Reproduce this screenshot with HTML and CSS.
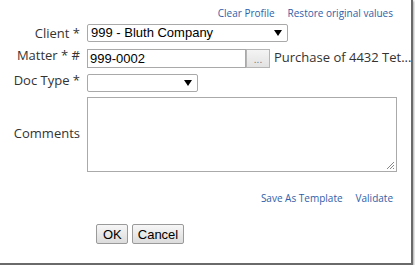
FILE: index.html
```html
<!DOCTYPE html>
<html>
<head>
<meta charset="utf-8">
<link rel="stylesheet" href="styles.css">
</head>
<body>
<div class="frame">
  <div class="toplinks">
    <a class="link">Clear Profile</a>
    <a class="link">Restore original values</a>
  </div>
  <div class="form">
    <div class="label">Client *</div>
    <div class="field">
      <div class="select client"><span>999 - Bluth Company</span><svg class="arrow" width="8" height="6" viewBox="0 0 8 6"><path d="M0 0H8L4 6Z" fill="#000"/></svg></div>
    </div>
    <div class="label">Matter * #</div>
    <div class="field">
      <div class="input matter">999-0002</div><div class="dots">...</div><span class="desc">Purchase of 4432 Tet...</span>
    </div>
    <div class="label">Doc Type *</div>
    <div class="field">
      <div class="select doctype"><span></span><svg class="arrow" width="8" height="6" viewBox="0 0 8 6"><path d="M0 0H8L4 6Z" fill="#000"/></svg></div>
    </div>
    <div class="label comments-label">Comments</div>
    <div class="field">
      <div class="textarea"><svg class="grip" width="9" height="9" viewBox="0 0 9 9"><path d="M8 1L1 8M8 4L4 8M8 7L7 8" stroke="#888" stroke-width="1"/></svg></div>
    </div>
  </div>
  <div class="actions">
    <a class="link">Save As Template</a>
    <a class="link">Validate</a>
  </div>
  <div class="buttons">
    <button class="btn ok">OK</button>
    <button class="btn cancel">Cancel</button>
  </div>
</div>
</body>
</html>
```
FILE: styles.css
```css
html, body {
  margin: 0;
  padding: 0;
  background: #fff;
}
.frame {
  box-sizing: border-box;
  width: 413px;
  height: 265px;
  border-right: 2px solid #6a6a6a;
  border-bottom: 2px solid #6a6a6a;
  box-shadow: 1px 1px 2px rgba(0,0,0,0.35);
  font-family: "Open Sans", sans-serif;
  color: #333;
  position: relative;
}
.link {
  color: #2f5ea8;
  font-size: 10px;
  font-family: "Open Sans", sans-serif;
}
.toplinks {
  display: flex;
  justify-content: flex-end;
  gap: 13px;
  padding: 6px 18px 0 0;
  height: 18px;
  box-sizing: border-box;
  line-height: 14px;
}
.form {
  display: grid;
  grid-template-columns: 80px auto;
  column-gap: 7px;
  row-gap: 0;
  margin-top: 5px;
}
.label {
  text-align: right;
  font-size: 13px;
  line-height: 18px;
  color: #333;
  align-self: center;
}
.comments-label {
  padding-top: 2px;
}
.field {
  display: flex;
  align-items: center;
}
.field:nth-child(2) { height: 19px; }
.field:nth-child(4) { height: 19px; margin-top: 7px; }
.field:nth-child(6) { height: 18px; margin-top: 6px; }
.field:nth-child(8) { margin-top: 5px; }
.select {
  box-sizing: border-box;
  height: 18px;
  border: 1px solid #a9a9a9;
  border-radius: 2px;
  background: #fff;
  display: flex;
  align-items: center;
  justify-content: space-between;
  padding: 0 5px 0 3px;
  font-family: "Liberation Sans", Arial, sans-serif;
  font-size: 13px;
  color: #000;
}
.client { width: 201px; }
.doctype { width: 111px; }
.input {
  box-sizing: border-box;
  height: 19px;
  width: 159px;
  border: 1px solid #a9a9a9;
  padding: 0 2px;
  font-family: "Liberation Sans", Arial, sans-serif;
  font-size: 13px;
  line-height: 17px;
  color: #000;
}
.dots {
  box-sizing: border-box;
  width: 24px;
  height: 19px;
  border: 1px solid #b5b5b5;
  background: linear-gradient(#f4f4f4, #e2e2e2);
  font-family: "Liberation Sans", Arial, sans-serif;
  font-size: 10px;
  color: #777;
  text-align: center;
  line-height: 19px;
}
.desc {
  margin-left: 4px;
  font-size: 13px;
  color: #333;
  white-space: nowrap;
  position: relative;
  top: -2px;
}
.textarea {
  box-sizing: border-box;
  width: 310px;
  height: 75px;
  border: 1px solid #aaa;
  position: relative;
  background: #fff;
}
.grip {
  position: absolute;
  right: 1px;
  bottom: 1px;
}
.actions {
  display: flex;
  justify-content: flex-end;
  gap: 13px;
  padding-right: 18px;
  margin-top: 19px;
  line-height: 14px;
}
.buttons {
  display: flex;
  gap: 4px;
  padding-left: 96px;
  margin-top: 19px;
}
.btn {
  box-sizing: border-box;
  height: 20px;
  padding: 0 6px;
  border: 1px solid #9a9a9a;
  border-radius: 2px;
  background: linear-gradient(#f7f7f7, #dcdcdc);
  font-family: "Liberation Sans", Arial, sans-serif;
  font-size: 13px;
  color: #000;
  margin: 0;
}
.ok { width: 32px; }
.cancel { width: 52px; padding: 0; }
```
